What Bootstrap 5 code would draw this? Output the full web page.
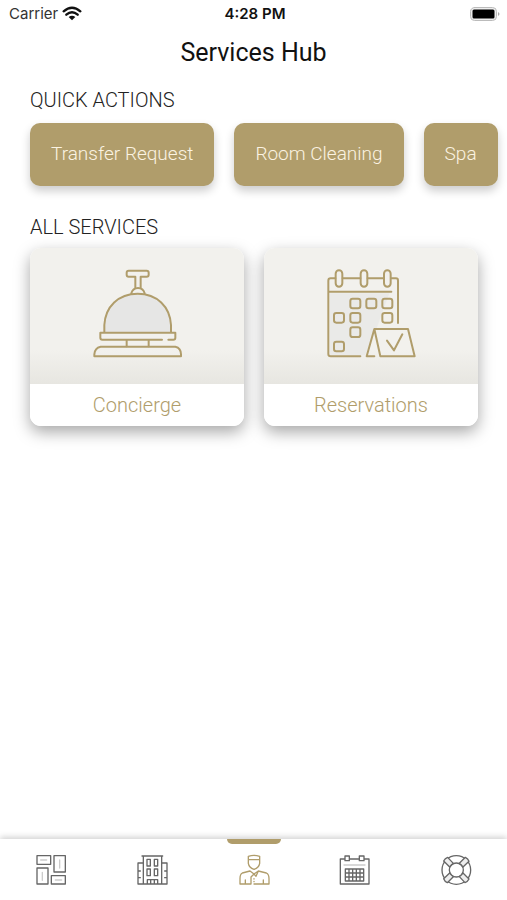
<!DOCTYPE html>
<html lang="en">
<head>
<meta charset="utf-8">
<meta name="viewport" content="width=device-width, initial-scale=1">
<title>Services Hub</title>
<link href="https://cdn.jsdelivr.net/npm/bootstrap@5.3.0/dist/css/bootstrap.min.css" rel="stylesheet">
<style>
:root { --gold: #b09d6b; }
body { font-family: Roboto, "Liberation Sans", sans-serif; font-weight: 300; color: #222; background: #fff; }
svg { display: block; fill: none; stroke-linecap: round; stroke-linejoin: round; }
.status { height: 28px; padding: 0 6px 0 9px; font: 400 15px/28px Inter, sans-serif; color: #333; }
.status-time { font-weight: 600; color: #111; }
.page-title { font-size: 25px; line-height: 32px; font-weight: 400; color: #111; margin: 9px 0 0; }
.content { padding-top: 19px; }
.section-title { font-size: 20px; line-height: 24px; font-weight: 300; margin: 0; padding-left: 30px; }
.actions { gap: 20px; padding: 11px 10px 29px 30px; overflow-x: auto; scrollbar-width: none; }
.btn-gold { --bs-btn-color: #fbf3e2; --bs-btn-bg: var(--gold); --bs-btn-hover-color: #fff; --bs-btn-hover-bg: #a08d5b;
  --bs-btn-active-color: #fff; --bs-btn-active-bg: #a08d5b; --bs-btn-font-size: 19px; --bs-btn-font-weight: 300;
  --bs-btn-padding-x: 21px; --bs-btn-border-width: 0; --bs-btn-border-radius: 10px;
  height: 63px; box-shadow: 0 5px 10px rgba(0,0,0,.2); }
.services { gap: 20px; padding: 9px 29px 0 30px; }
.service { flex: 1 1 0; border-radius: 11px; overflow: hidden; box-shadow: 0 6px 16px rgba(0,0,0,.35); color: var(--gold); }
.service-art { height: 136px; background: linear-gradient(#f2f1ed 75%, #e7e6e1); }
.service-art svg { stroke: var(--gold); stroke-width: 6; }
.service-name { font-size: 20px; line-height: 42px; background: #fff; }
.tabs { height: 61px; background: #fff; box-shadow: 0 -2px 6px rgba(0,0,0,.18); }
.tab svg { stroke: #666; stroke-width: 4; }
.tab.active svg { stroke: var(--gold); }
.tab.active::before { content: ""; position: absolute; top: 0; left: 50%; width: 54px; height: 5px; margin-left: -27px; background: var(--gold); border-radius: 0 0 5px 5px; }
</style>
</head>
<body class="d-flex flex-column min-vh-100">
<header>
  <div class="status d-flex align-items-center">
    <div class="col d-flex align-items-center gap-1"><span>Carrier</span>
      <svg width="20" height="16" viewBox="183 15 60 48" role="img" aria-label="Wi-Fi" stroke="#111" stroke-width="7" stroke-linecap="butt"><path d="M188 31Q213 9 238 31M196 41Q213 26 230 41"/><path d="M203 48Q213 40 223 48L213 58Z" fill="#111" stroke="none"/></svg>
    </div>
    <div class="status-time">4:28 PM</div>
    <div class="col d-flex justify-content-end">
      <svg width="32" height="16" viewBox="0 0 32 16" role="img" aria-label="Battery full"><rect x="1.5" y="1.5" width="26" height="13" rx="4" fill="#eee" stroke="#bbb"/><rect x="3.5" y="3.5" width="22" height="9" rx="1.5" fill="#000"/><path d="M29 6Q32 8 29 10Z" fill="#aaa"/></svg>
    </div>
  </div>
  <h1 class="page-title text-center">Services Hub</h1>
</header>

<main class="content flex-grow-1">
  <section>
    <h2 class="section-title">QUICK ACTIONS</h2>
    <div class="actions d-flex">
      <button type="button" class="btn btn-gold text-nowrap flex-shrink-0">Transfer Request</button>
      <button type="button" class="btn btn-gold text-nowrap flex-shrink-0">Room Cleaning</button>
      <button type="button" class="btn btn-gold text-nowrap flex-shrink-0">Spa</button>
    </div>
  </section>
  <section>
    <h2 class="section-title">ALL SERVICES</h2>
    <div class="services d-flex">
      <a href="#concierge" class="service text-decoration-none text-center">
        <div class="service-art d-flex align-items-center justify-content-center">
          <svg width="100" height="100" viewBox="21 33 300 300" aria-hidden="true">
            <path d="M73 230V210C76 155 115 116 173 116S270 155 273 210V230" fill="#e6e6e5"/>
            <path d="M146 47H200Q206 47 206 53V59Q206 65 200 65H182V98M166 98V65H146Q140 65 140 59V53Q140 47 146 47"/>
            <path d="M154 115C157 104 163 99 174 99S191 104 194 115"/>
            <path d="M246 254H67Q61 254 61 248V233H286V248Q286 254 280 254H265M140 255V274M206 255V274"/>
            <path d="M62 275H286Q303 279 303 298V304H43V298Q44 279 62 275Z"/>
          </svg>
        </div>
        <div class="service-name">Concierge</div>
      </a>
      <a href="#reservations" class="service text-decoration-none text-center">
        <div class="service-art d-flex align-items-center justify-content-center">
          <svg width="100" height="100" viewBox="33 33 300 300" aria-hidden="true">
            <path d="M60 115H238L200 220L165 300H60Z" fill="#eaeae8" stroke="none"/>
            <path d="M76 70H62Q55 70 55 77V297Q55 304 62 304H151M98 70H151M173 70H220M243 70H258Q264 70 264 77V204M57 110H244"/>
            <g><rect x="77" y="46" width="20" height="49" rx="10"/><rect x="152" y="46" width="20" height="49" rx="10"/><rect x="222" y="46" width="20" height="49" rx="10"/></g>
            <g><rect x="121" y="131" width="30" height="29" rx="7"/><rect x="169" y="131" width="30" height="29" rx="7"/><rect x="217" y="131" width="30" height="29" rx="7"/><rect x="72" y="174" width="30" height="29" rx="7"/><rect x="121" y="174" width="30" height="29" rx="7"/><rect x="217" y="174" width="30" height="29" rx="7"/><rect x="121" y="217" width="30" height="29" rx="7"/><rect x="72" y="260" width="30" height="29" rx="7"/></g>
            <path d="M193 304H170L193 222H294L314 304H211L193 222M231 257L252 286L277 238"/>
          </svg>
        </div>
        <div class="service-name">Reservations</div>
      </a>
    </div>
  </section>
</main>

<nav class="tabs d-flex sticky-bottom" aria-label="Main">
  <a href="#home" class="tab col d-flex align-items-center justify-content-center" aria-label="Overview">
    <svg width="32" height="32" viewBox="45 70 96 96"><path d="M51 75H92V101H51ZM102 75H136V124H102ZM51 112H84V160H51ZM94 135H136V160H94Z"/><path d="M62 88H80M119 88V112M67 125V149M106 148H125" stroke="#ccc"/></svg>
  </a>
  <a href="#hotel" class="tab col d-flex align-items-center justify-content-center" aria-label="Hotel">
    <svg width="32" height="32" viewBox="348 70 96 96"><path d="M366 76H428M370 77V160M425 77V160M370 97H354V160H441V97H425M354 121H361M354 141H361M434 121H441M434 141H441M381 86H391V106H381ZM403 86H413V106H403ZM381 115H391V135H381ZM403 115H413V135H403ZM382 160V147H413V160M392 148V160M403 148V160"/></svg>
  </a>
  <a href="#services" class="tab active position-relative col d-flex align-items-center justify-content-center" aria-label="Services" aria-current="page">
    <svg width="32" height="32" viewBox="83 70 96 96"><path d="M114 87V77Q131 71 148 77V87ZM114 87V98Q116 111 131 116Q146 111 148 98V87M119 121L96 127Q89 130 89 144V160H122V139L131 130L119 121M144 121L168 127Q176 130 176 144V160H131M144 121L131 130L137 137L144 121M105 148V160M159 148V160M131 144V145M131 152V153"/></svg>
  </a>
  <a href="#calendar" class="tab col d-flex align-items-center justify-content-center" aria-label="Calendar">
    <svg width="32" height="32" viewBox="57 70 96 96"><path d="M75 85H61V160H147V85H132M88 85H118M75 76H88V90H75ZM118 76H132V90H118ZM76 115H131V151H76ZM76 127H131M76 139H131M87 115V151M98 115V151M109 115V151M120 115V151"/><path d="M72 103H135" stroke="#ccc"/></svg>
  </a>
  <a href="#help" class="tab col d-flex align-items-center justify-content-center" aria-label="Help">
    <svg width="32" height="32" viewBox="361 70 96 96"><circle cx="410" cy="118" r="43"/><circle cx="410" cy="118" r="21"/>
      <g fill="#eee"><path id="strap" d="M372 91Q376 83 384 80L401 98Q394 102 390 109Z"/><use href="#strap" transform="rotate(90 410 118)"/><use href="#strap" transform="rotate(180 410 118)"/><use href="#strap" transform="rotate(270 410 118)"/></g></svg>
  </a>
</nav>
<script src="https://cdn.jsdelivr.net/npm/bootstrap@5.3.0/dist/js/bootstrap.bundle.min.js"></script>
</body>
</html>
